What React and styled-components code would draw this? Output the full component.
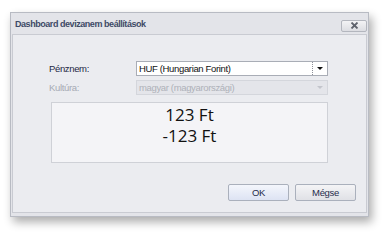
import React from "react";
import styled, { createGlobalStyle } from "styled-components";

const Global = createGlobalStyle`
  html, body {
    margin: 0;
    padding: 0;
    background: #ffffff;
  }
`;

const Page = styled.div`
  width: 391px;
  height: 242px;
  padding: 12px 0 0 10px;
  box-sizing: border-box;
  font-family: "Liberation Sans", Arial, sans-serif;
  font-size: 9.5px;
  letter-spacing: -0.35px;
`;

const Window = styled.div`
  width: 359px;
  height: 205px;
  box-sizing: border-box;
  border: 1px solid #b8bbc3;
  background: #e3e4e9;
  box-shadow: 3px 5px 9px rgba(0, 0, 0, 0.33);
  display: flex;
  flex-direction: column;
`;

const TitleBar = styled.div`
  height: 20px;
  display: flex;
  align-items: center;
  justify-content: space-between;
  padding: 1px 1px 0 4px;
`;

const Title = styled.span`
  font-weight: bold;
  font-size: 9px;
  color: #3e4a66;
  letter-spacing: -0.45px;
`;

const CloseButton = styled.div`
  width: 24px;
  height: 10px;
  margin-top: 3px;
  border: 1px solid #b3b6be;
  border-radius: 2px;
  background: linear-gradient(#f3f3f5, #dcdde2);
  display: flex;
  align-items: center;
  justify-content: center;
`;

const Client = styled.div`
  flex: 1;
  margin: 0 1px 3px 1px;
  border: 1px solid #c9cbd2;
  background: #ebecf0;
  padding: 26px 0 0 36px;
  display: flex;
  flex-direction: column;
`;

const Row = styled.div`
  display: flex;
  align-items: center;
  height: 15px;
  margin-bottom: ${(p) => p.$gap || 4}px;
`;

const Label = styled.span`
  width: 87px;
  color: ${(p) => (p.$disabled ? "#a6aab4" : "#1d2844")};
`;

const Combo = styled.div`
  width: 192px;
  height: 15px;
  box-sizing: border-box;
  display: flex;
  border: 1px solid ${(p) => (p.$disabled ? "#d4d6dc" : "#a9adb6")};
  background: ${(p) => (p.$disabled ? "#e4e5ea" : "#ffffff")};
`;

const ComboText = styled.div`
  flex: 1;
  padding-left: 2px;
  line-height: 13px;
  color: ${(p) => (p.$disabled ? "#aeb1b9" : "#111111")};
  border-right: 1px ${(p) => (p.$disabled ? "solid #e4e5ea" : "dotted #8d9099")};
  white-space: nowrap;
  overflow: hidden;
`;

const ComboButton = styled.div`
  width: 14px;
  display: flex;
  align-items: center;
  justify-content: center;
  background: ${(p) => (p.$disabled ? "#e4e5ea" : "#ffffff")};
`;

const Arrow = styled.div`
  width: 0;
  height: 0;
  border-left: 3px solid transparent;
  border-right: 3px solid transparent;
  border-top: 3px solid ${(p) => (p.$disabled ? "#c3c5cc" : "#111111")};
`;

const Preview = styled.div`
  width: 277px;
  height: 61px;
  margin-top: 2px;
  margin-left: 2px;
  box-sizing: border-box;
  border: 1px solid #cfd1d7;
  background: #f4f4f7;
  display: flex;
  flex-direction: column;
  align-items: center;
  padding-top: 1px;
  font-family: "Open Sans", "Noto Sans", sans-serif;
  font-size: 17px;
  line-height: 21px;
  letter-spacing: 0;
  color: #111111;
`;

const Buttons = styled.div`
  display: flex;
  gap: 6px;
  margin-top: 21px;
  margin-left: 179px;
`;

const Button = styled.div`
  width: 61px;
  height: 17px;
  box-sizing: border-box;
  border: 1px solid #aab0bc;
  border-radius: 2px;
  background: ${(p) =>
    p.$primary
      ? "linear-gradient(#f4f6fc, #dde3f3)"
      : "linear-gradient(#f4f4f6, #e0e1e6)"};
  display: flex;
  align-items: center;
  justify-content: center;
  color: #1f2b4b;
`;

export default function App() {
  return (
    <>
      <Global />
      <Page>
        <Window>
          <TitleBar>
            <Title>Dashboard devizanem beállítások</Title>
            <CloseButton>
              <svg width="9" height="7" viewBox="0 0 9 7">
                <path d="M1.5 0.5 L7.5 6.5 M7.5 0.5 L1.5 6.5" stroke="#5f636d" strokeWidth="1.8" />
              </svg>
            </CloseButton>
          </TitleBar>
          <Client>
            <Row>
              <Label>Pénznem:</Label>
              <Combo>
                <ComboText>HUF (Hungarian Forint)</ComboText>
                <ComboButton>
                  <Arrow />
                </ComboButton>
              </Combo>
            </Row>
            <Row $gap={5}>
              <Label $disabled>Kultúra:</Label>
              <Combo $disabled>
                <ComboText $disabled>magyar (magyarországi)</ComboText>
                <ComboButton $disabled>
                  <Arrow $disabled />
                </ComboButton>
              </Combo>
            </Row>
            <Preview>
              <span>123 Ft</span>
              <span>-123 Ft</span>
            </Preview>
            <Buttons>
              <Button $primary>OK</Button>
              <Button>Mégse</Button>
            </Buttons>
          </Client>
        </Window>
      </Page>
    </>
  );
}
